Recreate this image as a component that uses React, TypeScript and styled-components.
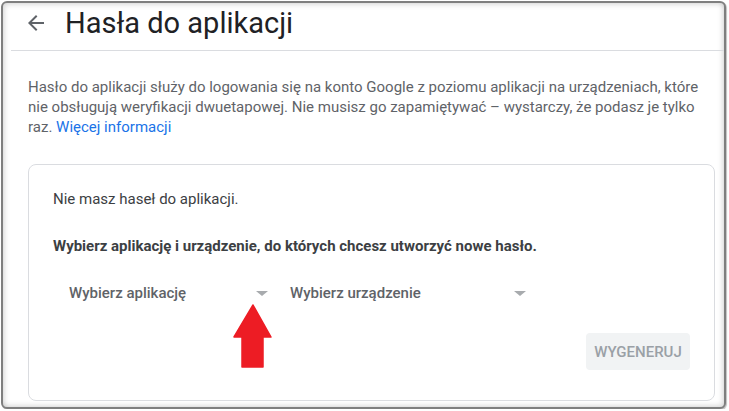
import React from "react";
import styled, { createGlobalStyle } from "styled-components";

const Global = createGlobalStyle`
  html, body { margin: 0; padding: 0; background: #ffffff; }
  body { font-family: Roboto, "Noto Sans", Arial, sans-serif; -webkit-font-smoothing: antialiased; }
  * { box-sizing: border-box; }
`;

const Frame = styled.div`
  position: relative;
  margin: 1px 0 0 1px;
  width: 725px;
  height: 408px;
  border: 2px solid #7f7f7f;
  border-radius: 6px;
  background: #ffffff;
  box-shadow: inset 2px 2px 5px rgba(0, 0, 0, 0.12), inset -2px -2px 5px rgba(0, 0, 0, 0.12), 1px 1px 1px rgba(0, 0, 0, 0.25);
  overflow: hidden;
`;

const Header = styled.header`
  display: flex;
  align-items: center;
  height: 48px;
  margin-left: 8px;
  padding: 0 0 8px 13px;
  border-bottom: 1px solid #dadce0;
`;

const BackButton = styled.span`
  display: flex;
  width: 24px;
  height: 24px;
  color: #5f6368;
`;

const Title = styled.h1`
  margin: 0 0 0 17px;
  font-size: 29px;
  font-weight: 400;
  color: #202124;
  line-height: 36px;
`;

const Content = styled.main`
  padding: 26px 9px 0 25px;
`;

const Intro = styled.p`
  margin: 0;
  max-width: 674px;
  font-size: 15px;
  line-height: 20px;
  color: #5f6368;
`;

const Link = styled.a`
  color: #1a73e8;
  text-decoration: none;
`;

const Card = styled.section`
  margin-top: 27px;
  height: 237px;
  border: 1px solid #dadce0;
  border-radius: 8px;
  padding: 24px 24px 0 24px;
  display: flex;
  flex-direction: column;
`;

const Text = styled.p<{ $bold?: boolean; $gap?: number }>`
  margin: ${(p) => p.$gap ?? 0}px 0 0 0;
  font-size: 15px;
  line-height: 20px;
  font-weight: ${(p) => (p.$bold ? 700 : 400)};
  color: #3c4043;
`;

const SelectRow = styled.div`
  display: flex;
  margin-top: 17px;
`;

const Select = styled.div<{ $w: number }>`
  display: flex;
  align-items: center;
  justify-content: space-between;
  width: ${(p) => p.$w}px;
  height: 40px;
  padding: 0 6px 0 16px;
  font-size: 15px;
  font-weight: 500;
  color: #5f6368;
`;

const Caret = styled.span`
  width: 0;
  height: 0;
  border-left: 6px solid transparent;
  border-right: 6px solid transparent;
  border-top: 5px solid #a8abae;
`;

const Actions = styled.div`
  display: flex;
  justify-content: flex-end;
  margin-top: 20px;
`;

const Button = styled.button`
  width: 104px;
  height: 37px;
  border: none;
  border-radius: 4px;
  background: #f1f3f4;
  color: #9aa0a6;
  font-family: Roboto, Arial, sans-serif;
  font-size: 15px;
  font-weight: 500;
  letter-spacing: 0;
  text-transform: uppercase;
  padding: 0;
`;

const RedArrow = styled.svg`
  position: absolute;
  left: 230px;
  top: 301px;
`;

export default function App() {
  return (
    <>
      <Global />
      <Frame>
        <Header>
          <BackButton>
            <svg width="24" height="24" viewBox="0 0 24 24" fill="currentColor">
              <path d="M20 11H7.83l5.59-5.59L12 4l-8 8 8 8 1.41-1.41L7.83 13H20v-2z" />
            </svg>
          </BackButton>
          <Title>Hasła do aplikacji</Title>
        </Header>
        <Content>
          <Intro>
            Hasło do aplikacji służy do logowania się na konto Google z poziomu aplikacji na urządzeniach, które
            nie obsługują weryfikacji dwuetapowej. Nie musisz go zapamiętywać – wystarczy, że podasz je tylko raz.{" "}
            <Link href="#">Więcej informacji</Link>
          </Intro>
          <Card>
            <Text>Nie masz haseł do aplikacji.</Text>
            <Text $bold $gap={27}>
              Wybierz aplikację i urządzenie, do których chcesz utworzyć nowe hasło.
            </Text>
            <SelectRow>
              <Select $w={221}>
                Wybierz aplikację
                <Caret />
              </Select>
              <Select $w={258}>
                Wybierz urządzenie
                <Caret />
              </Select>
            </SelectRow>
            <Actions>
              <Button disabled>Wygeneruj</Button>
            </Actions>
          </Card>
        </Content>
        <RedArrow width="40" height="65" viewBox="0 0 40 65">
          <polygon
            points="20,1 38,33 30,33 30,63 9,63 9,33 1,33"
            fill="#ed1c24"
            stroke="#ed1c24"
            strokeWidth="1.5"
            strokeLinejoin="round"
          />
        </RedArrow>
      </Frame>
    </>
  );
}
